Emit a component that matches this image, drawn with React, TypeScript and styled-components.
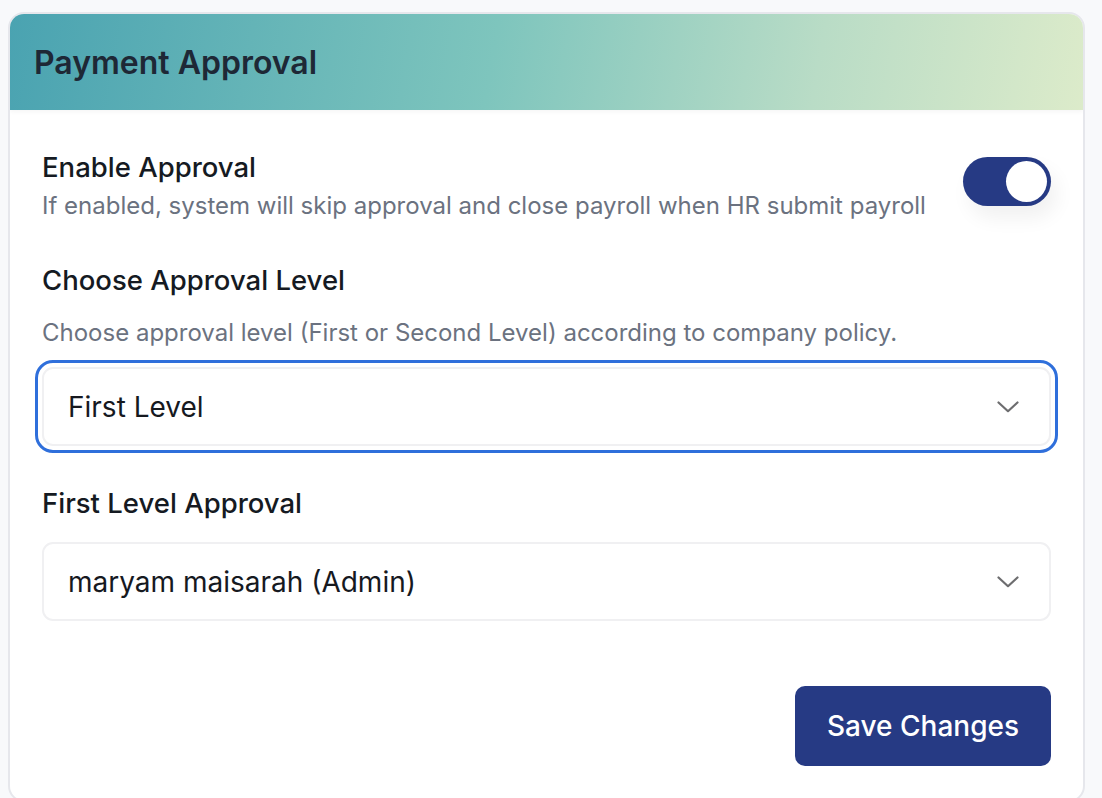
import React from "react";
import styled, { createGlobalStyle } from "styled-components";

const Global = createGlobalStyle`
  html, body { margin: 0; padding: 0; background: #f8f9fb; }
  body {
    font-family: Inter, "Noto Sans", sans-serif;
    -webkit-font-smoothing: antialiased;
  }
`;

const Page = styled.div`
  padding: 12px 17px 0 8px;
  height: 798px;
  box-sizing: border-box;
  overflow: hidden;
`;

const Card = styled.section`
  background: #ffffff;
  border: 2px solid #e6e7ec;
  border-radius: 16px;
  overflow: hidden;
  height: 790px;
  box-sizing: border-box;
  display: flex;
  flex-direction: column;
`;

const Header = styled.header`
  height: 96px;
  flex-shrink: 0;
  box-sizing: border-box;
  display: flex;
  align-items: center;
  padding: 0 24px;
  background: linear-gradient(100deg, #4aa3b1 0%, #7ec5bd 45%, #b9dcc6 75%, #dcebca 100%);
  box-shadow: 0 2px 4px rgba(0, 0, 0, 0.04);
`;

const Title = styled.h1`
  margin: 0;
  font-size: 32px;
  font-weight: 600;
  color: #1e2836;
`;

const Body = styled.div`
  display: flex;
  flex-direction: column;
  padding: 39px 32px 0 32px;
`;

const ToggleRow = styled.div`
  display: flex;
  align-items: flex-start;
  justify-content: space-between;
`;

const TextBlock = styled.div`
  display: flex;
  flex-direction: column;
`;

const Label = styled.div<{ $mt?: number }>`
  font-size: 27.5px;
  font-weight: 500;
  color: #151a22;
  line-height: 36px;
  margin-top: ${(p) => p.$mt ?? 0}px;
`;

const Hint = styled.div<{ $mt?: number }>`
  font-size: 24px;
  color: #6b7280;
  line-height: 32px;
  margin-top: ${(p) => p.$mt ?? 0}px;
`;

const Switch = styled.button<{ $on: boolean }>`
  width: 88px;
  height: 49px;
  border-radius: 25px;
  border: none;
  padding: 0;
  margin-top: 8px;
  background: ${(p) => (p.$on ? "#263a84" : "#d1d5db")};
  position: relative;
  cursor: pointer;
  box-shadow: 6px 12px 20px rgba(0, 0, 0, 0.06);
  flex-shrink: 0;
`;

const Knob = styled.span<{ $on: boolean }>`
  position: absolute;
  top: 4px;
  left: ${(p) => (p.$on ? "43px" : "4px")};
  width: 41px;
  height: 41px;
  border-radius: 50%;
  background: #ffffff;
`;

const SelectWrap = styled.div<{ $focused?: boolean; $mt?: number }>`
  margin-top: ${(p) => p.$mt ?? 0}px;
  height: 79px;
  flex-shrink: 0;
  box-sizing: border-box;
  border: 2px solid #f0f0f2;
  border-radius: 11px;
  display: flex;
  align-items: center;
  justify-content: space-between;
  padding: 0 30px 0 24px;
  background: #fff;
  outline: ${(p) => (p.$focused ? "3px solid #2f6fdb" : "none")};
  outline-offset: 4px;
`;

const SelectText = styled.span`
  font-size: 28px;
  color: #16191f;
`;

const Footer = styled.div`
  display: flex;
  justify-content: flex-end;
  margin-top: 65px;
`;

const Button = styled.button`
  width: 256px;
  height: 80px;
  border: none;
  border-radius: 10px;
  background: #263a84;
  color: #ffffff;
  font-family: Inter, "Noto Sans", sans-serif;
  font-size: 28px;
  font-weight: 500;
  cursor: pointer;
`;

const Chevron = () => (
  <svg width="22" height="12" viewBox="0 0 22 12" fill="none">
    <path d="M1.5 1.5 L11 10.2 L20.5 1.5" stroke="#6d6d6f" strokeWidth="2.2" strokeLinecap="round" strokeLinejoin="round" />
  </svg>
);

export default function App() {
  const [on, setOn] = React.useState(true);
  return (
    <Page>
      <Global />
      <Card>
        <Header>
          <Title>Payment Approval</Title>
        </Header>
        <Body>
          <ToggleRow>
            <TextBlock>
              <Label>Enable Approval</Label>
              <Hint $mt={5}>If enabled, system will skip approval and close payroll when HR submit payroll</Hint>
            </TextBlock>
            <Switch $on={on} onClick={() => setOn(!on)} aria-label="Enable Approval">
              <Knob $on={on} />
            </Switch>
          </ToggleRow>
          <Label $mt={40}>Choose Approval Level</Label>
          <Hint $mt={19}>Choose approval level (First or Second Level) according to company policy.</Hint>
          <SelectWrap $focused $mt={18}>
            <SelectText>First Level</SelectText>
            <Chevron />
          </SelectWrap>
          <Label $mt={39}>First Level Approval</Label>
          <SelectWrap $mt={21}>
            <SelectText>maryam maisarah (Admin)</SelectText>
            <Chevron />
          </SelectWrap>
          <Footer>
            <Button>Save Changes</Button>
          </Footer>
        </Body>
      </Card>
    </Page>
  );
}
